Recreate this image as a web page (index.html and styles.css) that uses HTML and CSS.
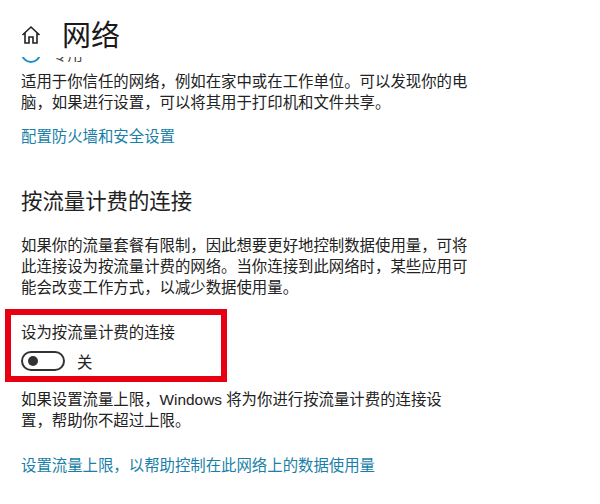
FILE: index.html
```html
<!DOCTYPE html>
<html lang="zh-CN">
<head>
  <meta charset="UTF-8" />
  <title>网络</title>
  <link rel="stylesheet" href="styles.css">
</head>
<body>
  <div class="page">
    <div class="header">
      <svg class="home-icon" viewBox="0 0 20 20" width="20" height="20">
        <path d="M1.5 10 L10 2 L18.5 10 M4 8 V18 H8 V12 H12 V18 H16 V8" fill="none" stroke="#222" stroke-width="1.6"/>
      </svg>
      <h1>网络</h1>
    </div>
    <div class="content">
      <div class="radio-row">
        <span class="radio"></span>
        <span>专用</span>
      </div>
      <p class="text first">适用于你信任的网络，例如在家中或在工作单位。可以发现你的电<br>脑，如果进行设置，可以将其用于打印机和文件共享。</p>
      <a class="link firewall">配置防火墙和安全设置</a>
      <h2>按流量计费的连接</h2>
      <p class="text">如果你的流量套餐有限制，因此想要更好地控制数据使用量，可将<br>此连接设为按流量计费的网络。当你连接到此网络时，某些应用可<br>能会改变工作方式，以减少数据使用量。</p>
      <div class="metered-box">
        <div class="metered-label">设为按流量计费的连接</div>
        <div class="toggle-row">
          <span class="toggle"><span class="knob"></span></span>
          <span>关</span>
        </div>
      </div>
      <p class="text">如果设置流量上限，Windows 将为你进行按流量计费的连接设<br>置，帮助你不超过上限。</p>
      <a class="link limit">设置流量上限，以帮助控制在此网络上的数据使用量</a>
    </div>
  </div>
</body>
</html>
```

FILE: styles.css
```css
body {
  margin: 0;
  background-color: #fff;
  color: #222;
  font-family: 'Liberation Sans', 'Noto Sans CJK SC', sans-serif;
  font-size: 15.4px;
}
.page {
  width: 600px;
  height: 504px;
  overflow: hidden;
}
.header {
  display: flex;
  align-items: center;
  height: 57px;
  padding: 8px 0 0 21px;
  box-sizing: border-box;
}
.home-icon {
  margin-top: 4px;
}
h1 {
  margin: 0 0 0 21px;
  font-size: 29px;
  font-weight: 400;
  color: #1a1a1a;
}
.content {
  height: 447px;
  padding-left: 21px;
  overflow: hidden;
}
.radio-row {
  display: flex;
  align-items: center;
  gap: 11px;
  height: 20px;
  margin-top: -14px;
  color: #444;
}
.radio {
  width: 16px;
  height: 16px;
  border: 2px solid #1c8fc4;
  border-radius: 50%;
}
.text {
  margin: 0;
  line-height: 21px;
}
.first {
  margin-top: 8px;
}
.link {
  display: block;
  color: #1a7fa8;
}
.firewall {
  margin-top: 13px;
  line-height: 21px;
}
h2 {
  margin: 40px 0 18px;
  font-size: 21.4px;
  font-weight: 400;
  line-height: 30px;
}
.metered-box {
  width: 200px;
  height: 61px;
  margin: 11px 0 7px -16px;
  padding: 0 0 0 10px;
  border: 6px solid #e60012;
}
.metered-label {
  padding-top: 7px;
  line-height: 21px;
}
.toggle-row {
  display: flex;
  align-items: center;
  gap: 12px;
  margin-top: 8px;
  height: 20px;
}
.toggle {
  display: flex;
  align-items: center;
  box-sizing: border-box;
  width: 44px;
  height: 20px;
  padding-left: 5px;
  border: 2px solid #333;
  border-radius: 10px;
}
.knob {
  width: 10px;
  height: 10px;
  background-color: #333;
  border-radius: 50%;
}
.limit {
  margin-top: 24px;
  line-height: 21px;
}
```
